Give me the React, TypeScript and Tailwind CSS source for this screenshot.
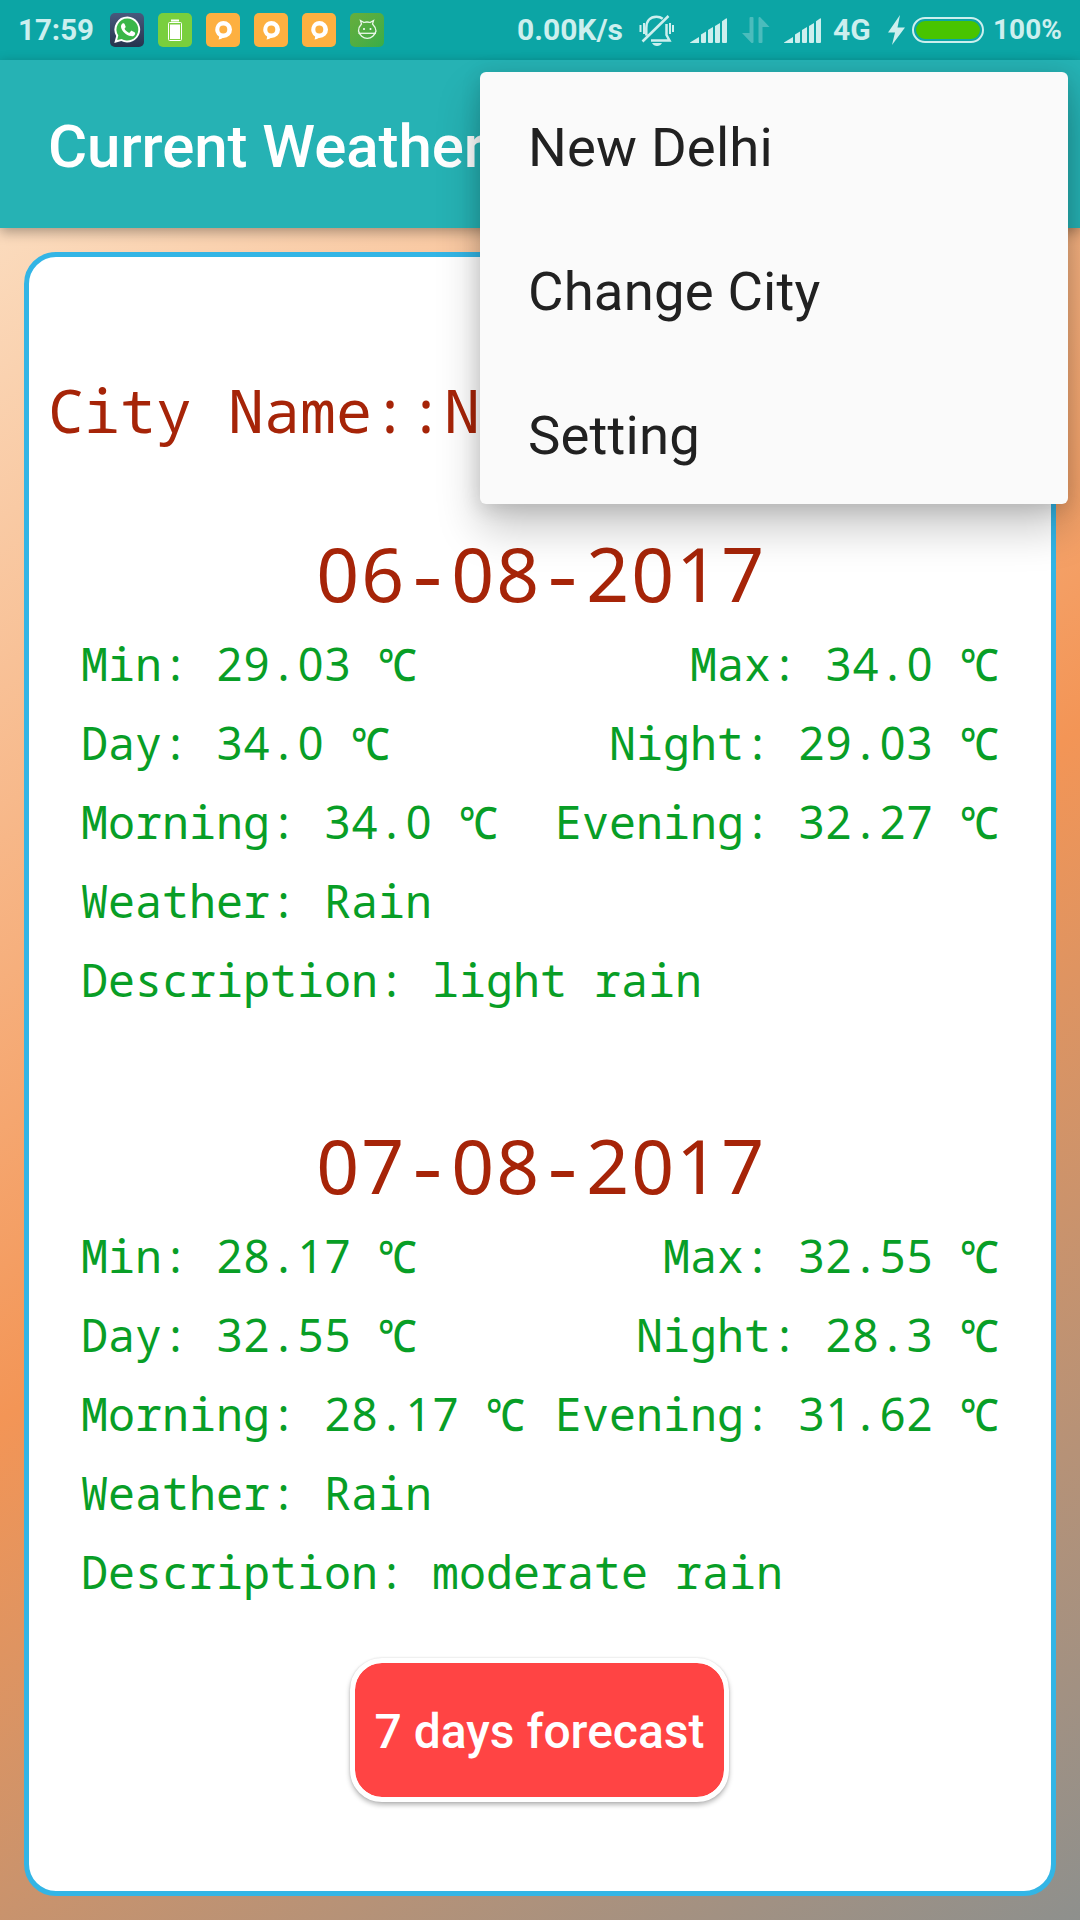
import type { ReactNode } from 'react';

type Day = {
  date: string;
  min: string;
  max: string;
  day: string;
  night: string;
  morning: string;
  evening: string;
  weather: string;
  description: string;
};

const days: Day[] = [
  { date: '06-08-2017', min: '29.03', max: '34.0', day: '34.0', night: '29.03', morning: '34.0', evening: '32.27', weather: 'Rain', description: 'light rain' },
  { date: '07-08-2017', min: '28.17', max: '32.55', day: '32.55', night: '28.3', morning: '28.17', evening: '31.62', weather: 'Rain', description: 'moderate rain' },
];

/* Monospaced text whose digits use an undotted zero, spaced to the same 0.6em pitch. */
function Mono({ children }: { children: string }) {
  return (
    <>
      {children.split(/([0-9]+|℃)/).map((run, i) =>
        /^[0-9]/.test(run) ? (
          <span key={i} className="-mr-[0.016em] ml-[0.016em] font-['Noto_Sans'] tracking-[0.028em]">{run}</span>
        ) : run === '℃' ? (
          <span key={i} className="inline-block h-[79px] w-[39px] origin-left scale-x-[0.86] align-top font-['Noto_Sans'] font-medium">{run}</span>
        ) : (
          run
        ),
      )}
    </>
  );
}

function Line({ left, right }: { left: string; right?: string }) {
  return (
    <div className="flex h-[79px] items-center justify-between whitespace-pre leading-[79px]">
      <span><Mono>{left}</Mono></span>
      {right && <span><Mono>{right}</Mono></span>}
    </div>
  );
}

function DayBlock({ d }: { d: Day }) {
  return (
    <section className="h-[592px] px-[52px] text-[45px] text-[#089e26]">
      <h2 className="h-[100px] text-center text-[75px] leading-[98px] text-[#a62408]"><Mono>{d.date}</Mono></h2>
      <Line left={`Min: ${d.min} ℃`} right={`Max: ${d.max} ℃`} />
      <Line left={`Day: ${d.day} ℃`} right={`Night: ${d.night} ℃`} />
      <Line left={`Morning: ${d.morning} ℃`} right={`Evening: ${d.evening} ℃`} />
      <Line left={`Weather: ${d.weather}`} />
      <Line left={`Description: ${d.description}`} />
    </section>
  );
}

function Tile({ className, children }: { className: string; children: ReactNode }) {
  return <span className={`flex size-[34px] items-center justify-center rounded-[5px] ${className}`}>{children}</span>;
}

function ChatTile() {
  return (
    <Tile className="bg-[#fdb040]">
      <svg width="34" height="34" viewBox="0 0 34 34">
        <path fill="#fff" fillRule="evenodd" d="M17.3 8a8.7 8.5 0 0 1 0 17h-.6q-1.500 1-4.200 1.500.7-1.300.6-3A8.700 8.500 0 0 1 17.300 8Zm0 4.500a4 4 0 1 0 0 8 4 4 0 0 0 0-8Z" />
      </svg>
    </Tile>
  );
}

function Signal() {
  return (
    <svg width="38" height="26" viewBox="0 0 38 26" fill="#cdefee">
      <path d="M0 24.500 9 19V25H.8Q0 25 0 24.500Z" />
      <path d="M11 16.500 16 13.500V24q0 1-1 1H12q-1 0-1-1Z" />
      <path d="M18 12 23 9V24q0 1-1 1H19q-1 0-1-1Z" />
      <path d="M25 8 30 5V24q0 1-1 1H26q-1 0-1-1Z" />
      <path d="M32 3.200 36 .5Q37 0 37 1V24q0 1-1 1H33q-1 0-1-1Z" />
    </svg>
  );
}

function StatusBar() {
  return (
    <header className="flex h-[60px] items-center bg-[#0ca5a5] pl-[18px] text-[28px] font-bold leading-[60px] text-[#cdefee]">
      <span className="w-[92px] text-[29.5px]">17:59</span>
      <div className="flex gap-[14px]">
        <Tile className="bg-linear-to-b from-[#48597d] to-[#26344d]">
          <svg width="34" height="34" viewBox="0 0 34 34">
            <path fill="#fff" d="M17.500 3.500a13 13 0 1 1-6.200 24.600L4.300 30 6.200 23A13 13 0 0 1 17.500 3.500Z" />
            <path fill="#39b649" d="M17.500 5.500a11 11 0 1 1-5.900 20.400L7.200 27.100 8.300 22.500A11 11 0 0 1 17.500 5.500Z" />
            <path fill="#fff" d="M13 10.300c.9-.3 1.300 0 1.700 1l.9 2.200c.2.800-.3 1.300-1.100 2.200.7 1.600 2.500 3.200 4.700 4.200l1.600-1.700c.4-.5.800-.4 1.300-.2l2.400 1.200c1 .5.700 1.800.1 2.700-.7 1-2.300 1.500-3.600 1.200-5-1-9.400-5-10-9.200-.2-1.500.8-3 2-3.600Z" />
          </svg>
        </Tile>
        <Tile className="bg-[#79cf3e]">
          <svg width="34" height="34" viewBox="0 0 34 34" fill="none">
            <path d="M13 7.500h8" stroke="#fff" strokeWidth="2" />
            <rect x="10.500" y="9.500" width="13" height="18" rx="1" stroke="#fff" />
            <rect x="12" y="11.500" width="10" height="14.500" fill="#fff" />
          </svg>
        </Tile>
        <ChatTile />
        <ChatTile />
        <ChatTile />
        <Tile className="bg-linear-to-br from-[#66ae3c] to-[#37ad48]">
          <svg width="34" height="34" viewBox="0 0 34 34" fill="none" stroke="#eaf8e9" strokeWidth="1.300">
            <path d="M8.500 18c0-3.500 1.500-5.500 3-7L10.500 7.500 14 9.500q3-1 6 0L23.500 7.500 22.500 11c1.500 1.500 3.500 3.500 3.500 7a9 9.500 0 0 1-17.500 0Z" />
            <path d="M8.500 20.300H26" />
            <circle cx="14" cy="16" r="1" fill="#fff" stroke="none" />
            <circle cx="20.500" cy="16" r="1" fill="#fff" stroke="none" />
          </svg>
        </Tile>
      </div>
      <span className="ml-[133px] w-[122px] text-[30px]">0.00K/s</span>
      <svg className="mt-px" width="36" height="33" viewBox="0 0 36 33" fill="none" stroke="#cdefee">
        <path strokeWidth="2.500" d="M7.300 21.500V14C7.300 7 11 2.700 17.500 2.700c2.500 0 4.500.7 6.200 2M27.500 10v11l3 5.500H12M3.500 27.500 29.500 2" />
        <path strokeWidth="2" d="M1.500 11v7M5 9v11M34 11v7M31 9v11" />
        <path fill="#cdefee" stroke="none" d="M13 29H23q-1.500 3-5 3t-5-3Z" />
      </svg>
      <span className="ml-[15px] mt-[1px]"><Signal /></span>
      <svg className="ml-[14px]" width="28" height="28" viewBox="0 0 28 28" fill="#4bbcbc">
        <path d="M7.500 2q0-1 1-1h2q1 0 1 1V26q0 1-1 1H9.500L0 17H7.500Z" />
        <path d="M16.500 2q0-1 1-1H18L27.500 11H20.500V26q0 1-1 1h-2q-1 0-1-1Z" />
      </svg>
      <span className="ml-[14px] mt-[1px]"><Signal /></span>
      <span className="ml-[11px] w-[55px] text-[30px] leading-[62px]">4G</span>
      <svg width="18" height="30" viewBox="0 0 18 30" fill="#cdefee">
        <path d="M12 0 0 17.500H7L4 30 17 12.500H9.500Z" />
      </svg>
      <span className="ml-[6px] flex h-[26px] w-[72px] rounded-full border-2 border-[#cdefee] p-[2px]">
        <span className="flex-1 rounded-full bg-[#48c400]" />
      </span>
      <span className="ml-[9px] leading-[62px]">100%</span>
    </header>
  );
}

export default function App() {
  return (
    <div className="relative flex h-[1920px] w-[1080px] flex-col overflow-hidden font-['Roboto',sans-serif]">
      <StatusBar />
      <div className="z-10 flex h-[168px] shrink-0 items-center bg-[#26b2b4] pt-[6px] pl-[48px] shadow-[0_4px_12px_rgba(0,0,0,0.32)]">
        <h1 className="text-[60px] font-medium leading-[70px] tracking-[-0.001em] text-white">Current Weather</h1>
      </div>
      <div className="h-[1692px] bg-[linear-gradient(147.450deg,#fbdbbd_0%,#f39556_50%,#8e908d_100%)] p-[24px]">
        <main className="flex h-[1644px] flex-col rounded-[32px] border-[5px] border-[#33b5e5] bg-white font-['Noto_Sans_Mono','DejaVu_Sans_Mono',monospace]">
          <p className="mt-[113px] ml-[19px] h-[80px] whitespace-nowrap text-[60px] leading-[80px] text-[#a62408]">City Name::N</p>
          <div className="mt-[74px]">
            {days.map((d) => <DayBlock key={d.date} d={d} />)}
          </div>
          <button className="-mt-[50px] ml-[321px] h-[144px] w-[379px] shrink-0 rounded-[32px] border-[5px] border-white bg-[#ff4444] bg-clip-padding pt-[4px] font-['Roboto'] text-[48px] font-medium text-white shadow-[0_3px_5px_rgba(0,0,0,0.28),0_0_2px_rgba(0,0,0,0.15)]">
            7 days forecast
          </button>
        </main>
      </div>
      <ul className="absolute top-[72px] left-[480px] z-20 h-[432px] w-[588px] rounded-[6px] bg-[#fafafa] text-[54.5px] tracking-[0.003em] text-[#212121] shadow-[0_24px_44px_rgba(0,0,0,0.22),0_4px_20px_rgba(0,0,0,0.14)]">
        {['New Delhi', 'Change City', 'Setting'].map((item) => (
          <li key={item} className="flex h-[144px] items-center pt-[5px] pl-[48px] leading-[64px]">{item}</li>
        ))}
      </ul>
    </div>
  );
}
